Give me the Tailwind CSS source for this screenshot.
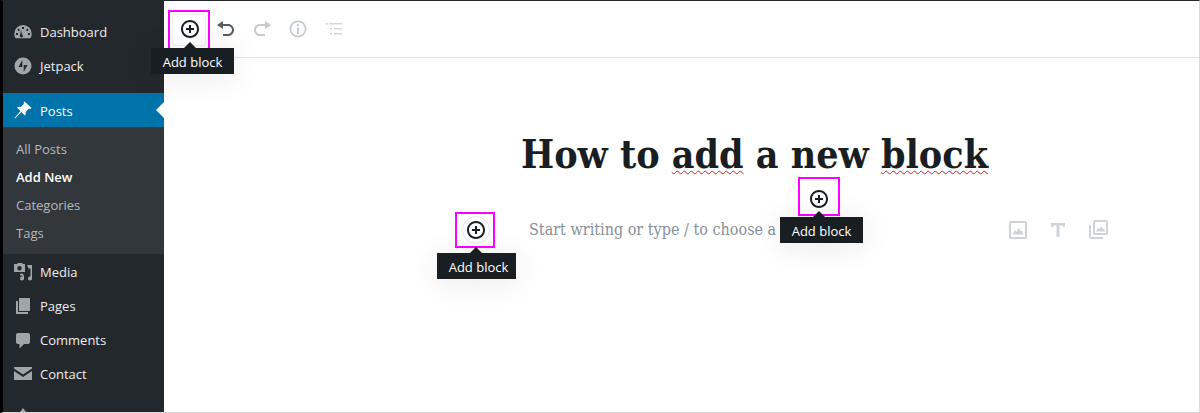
<!DOCTYPE html>
<html lang="en">
<head>
  <meta charset="UTF-8">
  <title>How to add a new block</title>
  <script src="https://cdn.jsdelivr.net/npm/@tailwindcss/browser@4"></script>
</head>
<body class="bg-white overflow-hidden font-['Open_Sans',sans-serif]">
  <div class="relative flex w-[1200px] h-[413px] overflow-hidden border-t border-t-[#23282d] border-b border-b-[#d9d9d9] border-r border-r-[#d9d9d9] border-l-[3px] border-l-black">
    <!-- Sidebar -->
    <aside class="w-[161px] shrink-0 bg-[#23282d] pt-[14px] text-[13px] text-[#eeeeee]">
      <a class="flex items-center h-[34px]">
        <svg class="ml-[10px] w-[20px] h-[20px] text-[#a0a5aa]" viewBox="0 0 20 20" fill="currentColor"><path fill-rule="evenodd" d="M10 3a8.600 8.600 0 0 0-8.700 8.700c0 1.700.5 3.200 1.300 4.500h14.800c.8-1.300 1.300-2.800 1.300-4.500A8.600 8.600 0 0 0 10 3zM9 5h2v2H9zM5.500 6.500 7 8 5.800 9.200 4.300 7.700zm9 0 1.200 1.200L14.200 9.200 13 8zM3 11h2v2H3zm12 0h2v2h-2zM8 8l1 4.500a1.500 1.500 0 1 1-2 .9z"/></svg>
        <span class="ml-[7px] pt-[2px]">Dashboard</span>
      </a>
      <a class="flex items-center h-[34px]">
        <svg class="ml-[10px] w-[20px] h-[20px] text-[#a0a5aa]" viewBox="0 0 20 20" fill="currentColor"><path fill-rule="evenodd" d="M10 1.500a8.500 8.500 0 1 0 0 17 8.500 8.500 0 0 0 0-17zM9.300 4v7H5.500zm1.400 12V9h3.800z"/></svg>
        <span class="ml-[7px] pt-[2px]">Jetpack</span>
      </a>
      <a class="relative flex items-center h-[34px] mt-[10px] bg-[#0073aa] text-white">
        <svg class="ml-[10px] w-[20px] h-[20px]" viewBox="0 0 20 20" fill="currentColor"><path d="M11.500 1.500l7 6.500-1.300 1.100-1.400-.4-3.300 3.200c.4 1.400.2 2.800-.6 3.700L8.300 12 2 18.500l-.5-.4L7.500 11 4 7.500c1-.9 2.500-1.100 3.900-.6l3.100-3.200-.4-1.300z"/></svg>
        <span class="ml-[7px] pt-[3px]">Posts</span>
        <span class="absolute right-0 top-[9px] w-0 h-0 border-y-[8px] border-y-transparent border-r-[8px] border-r-white"></span>
      </a>
      <div class="bg-[#32373c] pt-[9px] h-[127px] text-[13px] text-[#b4b9be]">
        <a class="flex items-center h-[28px] pl-[13px]">All Posts</a>
        <a class="flex items-center h-[28px] pl-[13px] font-semibold text-white">Add New</a>
        <a class="flex items-center h-[28px] pl-[13px]">Categories</a>
        <a class="flex items-center h-[28px] pl-[13px]">Tags</a>
      </div>
      <a class="flex items-center h-[34px] mt-[1px]">
        <svg class="ml-[10px] w-[20px] h-[20px] text-[#a0a5aa]" viewBox="0 0 20 20" fill="currentColor"><path fill-rule="evenodd" d="M1 2h3l1-1h4l1 1h2v8H1zm5.500 2a2.200 2.200 0 1 0 0 4.400 2.200 2.200 0 0 0 0-4.400zM14 3h5v13.500a2 2 0 1 1-1.500-1.900V6.500H15.500zM7 12a2.500 2.500 0 0 1 4 2v2.500a2 2 0 1 1-1.500-1.900V13.500H7z"/></svg>
        <span class="ml-[7px] pt-[2px]">Media</span>
      </a>
      <a class="flex items-center h-[34px]">
        <svg class="ml-[10px] w-[20px] h-[20px] text-[#a0a5aa]" viewBox="0 0 20 20" fill="currentColor"><path d="M6 2h11v13H6zM3 5h2v11h10v2H3z"/></svg>
        <span class="ml-[7px] pt-[2px]">Pages</span>
      </a>
      <a class="flex items-center h-[34px]">
        <svg class="ml-[10px] w-[20px] h-[20px] text-[#a0a5aa]" viewBox="0 0 20 20" fill="currentColor"><path d="M5 3h10c1.100 0 2 .9 2 2v7c0 1.100-.9 2-2 2h-4l-4.500 4.500V14H5c-1.100 0-2-.9-2-2V5c0-1.100.9-2 2-2z"/></svg>
        <span class="ml-[7px] pt-[2px]">Comments</span>
      </a>
      <a class="flex items-center h-[34px]">
        <svg class="ml-[10px] w-[20px] h-[20px] text-[#a0a5aa]" viewBox="0 0 20 20" fill="currentColor"><path d="M1 3h18v1.500l-9 6-9-6zM1 7l9 6 9-6v9H1z"/></svg>
        <span class="ml-[7px] pt-[2px]">Contact</span>
      </a>
      <div class="flex mt-[15px]">
        <svg class="ml-[10px] w-[20px] h-[20px] text-[#a0a5aa]" viewBox="0 0 20 20" fill="currentColor"><path d="M10 2l3 4H7z"/></svg>
      </div>
    </aside>

    <!-- Editor -->
    <main class="flex-1 min-w-0">
      <div class="flex items-center gap-[16px] h-[57px] border-b border-[#e2e4e7] pl-[16px] pb-[1px] text-[#c5cacf]">
        <svg class="w-[20px] h-[20px] text-[#191e23]" viewBox="0 0 20 20" fill="currentColor"><path d="M10 1c-5 0-9 4-9 9s4 9 9 9 9-4 9-9-4-9-9-9zm0 16c-3.900 0-7-3.100-7-7s3.100-7 7-7 7 3.100 7 7-3.100 7-7 7zm1-11H9v3H6v2h3v3h2v-3h3V9h-3V6z"/></svg>
        <svg class="w-[20px] h-[20px] text-[#555d66]" viewBox="0 0 20 20" fill="currentColor"><path d="M12 5H7V2L1 6l6 4V7h5c2.200 0 4 1.800 4 4s-1.800 4-4 4H7v2h5c3.300 0 6-2.700 6-6s-2.700-6-6-6z"/></svg>
        <svg class="w-[20px] h-[20px]" viewBox="0 0 20 20" fill="currentColor"><path d="M8 5h5V2l6 4-6 4V7H8c-2.200 0-4 1.800-4 4s1.800 4 4 4h5v2H8c-3.300 0-6-2.700-6-6s2.700-6 6-6z"/></svg>
        <svg class="w-[20px] h-[20px]" viewBox="0 0 20 20" fill="currentColor"><path fill-rule="evenodd" d="M10 1.500a8.500 8.500 0 1 0 0 17 8.500 8.500 0 0 0 0-17zm0 1.700a6.800 6.800 0 1 1 0 13.600 6.800 6.800 0 0 1 0-13.600zM9 5h2v2H9zm0 3.500h2V15H9z"/></svg>
        <svg class="w-[20px] h-[20px] text-[#d5d8db]" viewBox="0 0 20 20" fill="currentColor"><path d="M2 4h2v1.500H2zm3 0h13v1.500H5zm1 5h2v1.500H6zm4 0h8v1.500h-8zm-4 5h2v1.500H6zm4 0h8v1.500h-8z"/></svg>
      </div>

      <div class="pl-[357px]">
        <h1 class="mt-[71px] whitespace-nowrap font-['DejaVu_Serif_Condensed','DejaVu_Serif',serif] font-bold text-[#191e23] text-[39px] leading-[50px]">How to <span class="underline decoration-wavy decoration-[#e0201c] decoration-1 underline-offset-[2px]">add</span> a new <span class="underline decoration-wavy decoration-[#e0201c] decoration-1 underline-offset-[2px]">block</span></h1>
        <div class="mt-[36px] ml-[8px] w-[579px] flex items-center justify-between h-[30px]">
          <p class="font-['DejaVu_Serif_Condensed','DejaVu_Serif',serif] text-[16px] text-[#87909a] whitespace-nowrap">Start writing or type / to choose a block</p>
          <div class="flex items-center gap-[20px] text-[#ced3d7]">
            <svg class="w-[20px] h-[20px]" viewBox="0 0 20 20" fill="currentColor"><path fill-rule="evenodd" d="M3 1h14c1.100 0 2 .9 2 2v14c0 1.100-.9 2-2 2H3c-1.100 0-2-.9-2-2V3c0-1.100.9-2 2-2zm0 2v14h14V3zM4.500 14.500 7 10l1.500 2 2-4 2.500 3.500 1-1 1.500 4z"/></svg>
            <svg class="w-[20px] h-[20px]" viewBox="0 0 20 20" fill="currentColor"><path d="M3 3h14v4h-2V5.500h-3.500V17h-3V5.500H5V7H3z"/></svg>
            <svg class="w-[20px] h-[20px]" viewBox="0 0 20 20" fill="currentColor"><path fill-rule="evenodd" d="M7 0h11c1.100 0 2 .9 2 2v11c0 1.100-.9 2-2 2H7c-1.100 0-2-.9-2-2V2c0-1.100.9-2 2-2zm0 2v11h11V2zM8 11.500l2.200-4 1.300 1.700 1.600-3 2.200 3 .7-.7 1 3zM1 5h2v12h12v2H3c-1.100 0-2-.9-2-2z"/></svg>
          </div>
        </div>
      </div>
    </main>

    <!-- Callouts over the editor: button highlight, arrow, tooltip -->
    <div class="absolute left-[165px] top-[9px] w-[42px] h-[40px] border-2 border-[#ff00ff]">
      <div class="absolute inset-[2px] rounded-[3px] border border-[#eeeeee]"></div>
    </div>
    <div class="absolute left-[148px] top-[47px] w-[83px] h-[26px] bg-[#191e23] text-white text-[13px] flex items-center justify-center pt-[4px] shadow-[0_3px_30px_rgba(25,30,35,0.1)]">
      Add block
      <span class="absolute left-[33px] -top-[6px] w-0 h-0 border-x-[6px] border-x-transparent border-b-[6px] border-b-[#191e23]"></span>
    </div>

    <div class="absolute left-[452px] top-[211px] w-[40px] h-[36px] border-2 border-[#ff00ff] flex items-center justify-center pl-[1px]">
      <span class="flex items-center justify-center w-[28px] h-[28px] rounded-full border border-[#e8e8ea] text-[#191e23]">
        <svg class="w-[20px] h-[20px]" viewBox="0 0 20 20" fill="currentColor"><path d="M10 1c-5 0-9 4-9 9s4 9 9 9 9-4 9-9-4-9-9-9zm0 16c-3.900 0-7-3.100-7-7s3.100-7 7-7 7 3.100 7 7-3.100 7-7 7zm1-11H9v3H6v2h3v3h2v-3h3V9h-3V6z"/></svg>
      </span>
    </div>
    <div class="absolute left-[434px] top-[252px] w-[79px] h-[26px] bg-[#191e23] text-white text-[13px] flex items-center justify-center pl-[4px] pt-[4px] shadow-[0_3px_30px_rgba(25,30,35,0.1)]">
      Add block
      <span class="absolute left-[33px] -top-[6px] w-0 h-0 border-x-[6px] border-x-transparent border-b-[6px] border-b-[#191e23]"></span>
    </div>

    <div class="absolute left-[795px] top-[176px] w-[42px] h-[39px] border-2 border-[#ff00ff] flex items-center justify-center pt-[5px] text-[#191e23]">
      <svg class="w-[20px] h-[20px]" viewBox="0 0 20 20" fill="currentColor"><path d="M10 1c-5 0-9 4-9 9s4 9 9 9 9-4 9-9-4-9-9-9zm0 16c-3.900 0-7-3.100-7-7s3.100-7 7-7 7 3.100 7 7-3.100 7-7 7zm1-11H9v3H6v2h3v3h2v-3h3V9h-3V6z"/></svg>
    </div>
    <div class="absolute left-[777px] top-[216px] w-[83px] h-[26px] bg-[#191e23] text-white text-[13px] flex items-center justify-center pt-[4px] shadow-[0_3px_30px_rgba(25,30,35,0.1)]">
      Add block
      <span class="absolute left-[33px] -top-[6px] w-0 h-0 border-x-[6px] border-x-transparent border-b-[6px] border-b-[#191e23]"></span>
    </div>
  </div>
</body>
</html>
